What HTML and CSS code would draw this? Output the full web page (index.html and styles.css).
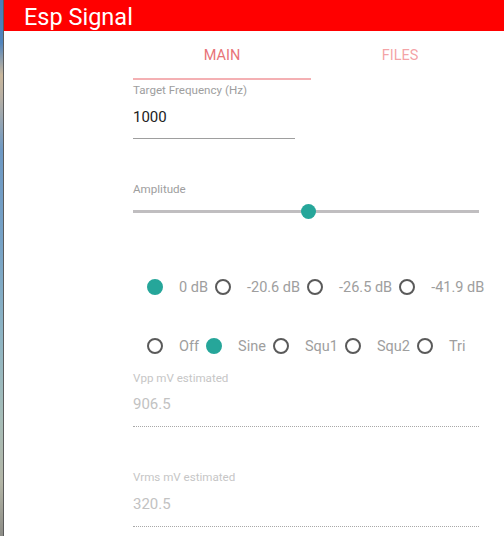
FILE: index.html
```html
<!DOCTYPE html>
<html>
<head>
<meta charset="utf-8">
<link rel="stylesheet" href="styles.css">
</head>
<body>
<div class="frame">
  <div class="desk"></div>
  <div class="app">
    <header class="bar">Esp Signal</header>
    <div class="content">
      <div class="tabs">
        <div class="tab active">MAIN</div>
        <div class="tab">FILES</div>
      </div>

      <div class="field freq">
        <div class="field-label">Target Frequency (Hz)</div>
        <div class="field-value">1000</div>
      </div>

      <div class="amp-label">Amplitude</div>
      <div class="slider">
        <div class="track"></div>
        <div class="thumb" style="left: calc(50.6% - 7.5px)"></div>
      </div>

      <div class="radios row1">
        <label class="radio"><span class="dot filled"></span><span class="txt">0 dB</span></label>
        <label class="radio"><span class="dot"></span><span class="txt">-20.6 dB</span></label>
        <label class="radio"><span class="dot"></span><span class="txt">-26.5 dB</span></label>
        <label class="radio"><span class="dot"></span><span class="txt">-41.9 dB</span></label>
      </div>

      <div class="radios row2">
        <label class="radio"><span class="dot"></span><span class="txt">Off</span></label>
        <label class="radio"><span class="dot filled"></span><span class="txt">Sine</span></label>
        <label class="radio"><span class="dot"></span><span class="txt">Squ1</span></label>
        <label class="radio"><span class="dot"></span><span class="txt">Squ2</span></label>
        <label class="radio"><span class="dot"></span><span class="txt">Tri</span></label>
      </div>

      <div class="field est vpp">
        <div class="field-label">Vpp mV estimated</div>
        <div class="field-value">906.5</div>
      </div>

      <div class="field est vrms">
        <div class="field-label">Vrms mV estimated</div>
        <div class="field-value">320.5</div>
      </div>
    </div>
  </div>
</div>
</body>
</html>
```

FILE: styles.css
```css
html, body {
  margin: 0;
  padding: 0;
  background: #fff;
}

body {
  font-family: Roboto, "Liberation Sans", sans-serif;
}

.frame {
  display: flex;
  height: 536px;
  overflow: hidden;
}

.desk {
  width: 3px;
  flex: 0 0 3px;
  border-right: 1px solid #5b5b5b;
  background: linear-gradient(to bottom,
    #4a7db8 0%, #5285bd 8%, #c9b79c 14%, #b8b0a4 18%,
    #6e99c4 28%, #76a2c6 45%, #8db4c4 62%, #a6bdb8 78%,
    #b3b5a6 90%, #8c8c86 100%);
}

.app {
  flex: 1;
  background: #fff;
}

.bar {
  height: 31px;
  box-sizing: border-box;
  padding: 4px 0 0 20px;
  line-height: 27px;
  background: #ff0000;
  color: #fff;
  font-size: 23.5px;
}

.content {
  padding-left: 129px;
}

.tabs {
  display: flex;
  width: 356px;
  height: 49px;
}

.tab {
  flex: 1;
  box-sizing: border-box;
  padding-top: 3px;
  text-align: center;
  font-size: 14.5px;
  line-height: 44px;
  border-bottom: 2px solid transparent;
  color: rgba(238, 110, 115, 0.65);
}

.tab.active {
  color: #e87378;
  border-bottom-color: #f4b0b3;
}

.field-label {
  font-size: 11.6px;
  line-height: 14px;
  color: #9e9e9e;
}

.field-value {
  font-size: 15px;
  line-height: 20px;
  color: #222;
}

.freq {
  width: 162px;
  margin-top: 3px;
  border-bottom: 1px solid #9e9e9e;
}

.freq .field-value {
  margin-top: 10px;
  padding-bottom: 11px;
}

.amp-label {
  margin-top: 43px;
  font-size: 11.6px;
  line-height: 14px;
  color: #9e9e9e;
}

.slider {
  position: relative;
  width: 346px;
  height: 15px;
  margin-top: 8px;
  display: flex;
  align-items: center;
}

.track {
  width: 100%;
  height: 3px;
  background: #c0bec0;
}

.thumb {
  position: absolute;
  top: 0;
  width: 15px;
  height: 15px;
  border-radius: 50%;
  background: #26a69a;
}

.radios {
  display: flex;
  gap: 3px;
  height: 24px;
  margin-left: 10px;
}

.row1 {
  margin-top: 56px;
}

.row2 {
  margin-top: 35px;
}

.radio {
  display: inline-flex;
  align-items: center;
  height: 24px;
}

.dot {
  box-sizing: border-box;
  width: 16px;
  height: 16px;
  margin-left: 4px;
  margin-right: 16px;
  border: 2px solid #5a5a5a;
  border-radius: 50%;
}

.dot.filled {
  border-color: #26a69a;
  background: #26a69a;
}

.txt {
  font-size: 14.5px;
  color: #9e9e9e;
}

.est {
  width: 346px;
  border-bottom: 1px dotted #a8a8a8;
}

.est .field-label {
  color: #c6c6c6;
}

.est .field-value {
  margin-top: 9px;
  padding-bottom: 12px;
  color: #c2c2c2;
}

.vpp {
  margin-top: 13px;
}

.vrms {
  margin-top: 43px;
}

.vrms .field-value {
  margin-top: 10px;
}
```
